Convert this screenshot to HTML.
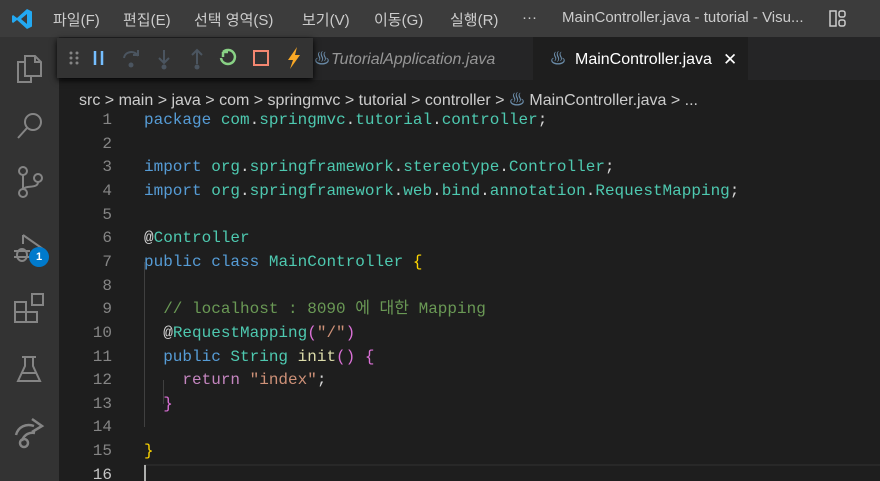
<!DOCTYPE html><html><head><meta charset="utf-8"><style>
*{margin:0;padding:0;box-sizing:border-box}
html,body{width:880px;height:481px;overflow:hidden}
body{background:#1e1e1e;font-family:"Liberation Sans","Noto Sans CJK KR",sans-serif;position:relative}
.title{position:absolute;left:0;top:0;width:880px;height:37px;background:#3c3c3c;color:#ccc;font-size:15px}
.title span{position:absolute;top:9px}
.act{position:absolute;left:0;top:37px;width:59px;height:444px;background:#333}
.tabs{position:absolute;left:59px;top:37px;width:821px;height:43px;background:#252526}
.tab{position:absolute;top:0;height:43px;font-size:16px;line-height:45px}
.bc{position:absolute;left:79px;top:86px;font-size:16px;color:#ccc;white-space:pre}
.code{position:absolute;left:59px;top:109px;font-family:"Liberation Mono","Noto Sans CJK KR",monospace;font-size:16px;line-height:23.65px;white-space:pre}
.ln{position:absolute;left:0;width:53px;text-align:right;color:#858585}
.tx{position:absolute;left:85px;color:#d4d4d4}
.k{color:#569cd6}.t{color:#4ec9b0}.c{color:#6a9955}.s{color:#ce9178}.r{color:#c586c0}.f{color:#dcdcaa}.y{color:#ffd700}.p{color:#da70d6}
.dbg{position:absolute;left:57px;top:38px;width:256px;height:40px;background:#333;box-shadow:0 2px 6px #000}
</style></head><body>
<div class="title">
<svg style="position:absolute;left:11px;top:8px" width="22" height="22" viewBox="0 0 22 22"><path d="M16 1 L21 3.5 V18.5 L16 21 L6 12 L2 15 L1 14 V8 L2 7 L6 10 Z M16 6 L10 11 L16 16 Z" fill="#23a9f2"/></svg>
<span style="left:53px">파일(F)</span><span style="left:123px">편집(E)</span><span style="left:194px">선택 영역(S)</span><span style="left:302px">보기(V)</span><span style="left:374px">이동(G)</span><span style="left:450px">실행(R)</span><span style="left:522px">···</span><span style="left:562px">MainController.java - tutorial - Visu...</span>
<svg style="position:absolute;left:829px;top:10px" width="18" height="18"><rect x="1" y="1" width="6" height="15" fill="none" stroke="#ccc" stroke-width="1.5"/><rect x="10" y="1" width="6" height="6" rx="2" fill="none" stroke="#ccc" stroke-width="1.5"/><rect x="10" y="10" width="6" height="6" rx="2" fill="none" stroke="#ccc" stroke-width="1.5"/></svg>
</div>
<div class="act">
<svg style="position:absolute;left:15px;top:17px" width="28" height="30" fill="none" stroke="#858585" stroke-width="2"><path d="M10 2 H20 L26 8 V22 H10 Z M20 2 V8 H26 M10 8 H3 V28 H16 V22"/></svg>
<svg style="position:absolute;left:15px;top:73px" width="30" height="30" fill="none" stroke="#858585" stroke-width="2"><circle cx="18" cy="12" r="8"/><path d="M12 18 L3 28"/></svg>
<svg style="position:absolute;left:15px;top:128px" width="30" height="34" fill="none" stroke="#858585" stroke-width="2"><circle cx="8" cy="6" r="4"/><circle cx="8" cy="28" r="4"/><circle cx="23" cy="13" r="4"/><path d="M8 10 V24 M23 17 C23 24 10 20 9 24"/></svg>
<svg style="position:absolute;left:12px;top:195px" width="34" height="32" fill="none" stroke="#858585" stroke-width="2"><path d="M11 3 L31 17 L20 20 M11 3 V12"/><ellipse cx="10" cy="23" rx="5" ry="6"/><path d="M2 19 H18 M2 25 H18"/></svg>
<div style="position:absolute;left:29px;top:210px;width:20px;height:20px;border-radius:50%;background:#007acc;color:#fff;font-size:11px;font-weight:bold;text-align:center;line-height:20px">1</div>
<svg style="position:absolute;left:13px;top:255px" width="32" height="32" fill="none" stroke="#858585" stroke-width="2"><path d="M2 10 H13 V30 H2 Z M2 20 H24 V30 H13 M19 2 H30 V13 H19 Z"/></svg>
<svg style="position:absolute;left:16px;top:318px" width="26" height="28" fill="none" stroke="#858585" stroke-width="2"><path d="M9 2 V11 L2 26 H24 L17 11 V2 M6 2 H20 M5 18 H21"/></svg>
<svg style="position:absolute;left:12px;top:378px" width="34" height="34" fill="none" stroke="#858585" stroke-width="2.5"><path d="M4 20 C6 12 14 8 22 11 M20 4 L30 11 L20 17 M10 26 C12 19 18 17 23 18"/><circle cx="12" cy="28" r="4"/></svg>
</div>
<div class="tabs">
<div class="tab" style="left:255px;width:218px;color:#969696;font-style:italic"><span style="position:absolute;left:0;font-style:normal;color:#6a8ba8">♨</span><span style="position:absolute;left:17px">TutorialApplication.java</span></div>
<div class="tab" style="left:474px;width:215px;background:#1e1e1e;color:#fff"><span style="position:absolute;left:17px;color:#6a8ba8">♨</span><span style="position:absolute;left:42px">MainController.java</span><span style="position:absolute;left:190px;font-size:17px">✕</span></div>
</div>
<div class="bc">src &gt; main &gt; java &gt; com &gt; springmvc &gt; tutorial &gt; controller &gt; <span style="color:#6a8ba8">♨</span> MainController.java &gt; ...</div>
<div class="dbg">
<svg width="256" height="40"><g fill="#858585"><circle cx="14" cy="15" r="1.5"/><circle cx="20" cy="15" r="1.5"/><circle cx="14" cy="20" r="1.5"/><circle cx="20" cy="20" r="1.5"/><circle cx="14" cy="25" r="1.5"/><circle cx="20" cy="25" r="1.5"/></g>
<path d="M38 13 V27 M45 13 V27" stroke="#75beff" stroke-width="2.5"/>
<g stroke="#4b5560" stroke-width="2" fill="none"><path d="M67 20 C68 13 78 12 81 18 M76 17 H81 V12"/><path d="M107 12 V24 M102 20 L107 25 L112 20"/><path d="M140 26 V13 M135 17 L140 12 L145 17"/></g>
<g fill="#4b5560"><circle cx="74" cy="27" r="2.5"/><circle cx="107" cy="29" r="2.5"/><circle cx="140" cy="29" r="2.5"/></g>
<path d="M166 14 A7 7 0 1 1 164 20 M166 14 V19 M166 14 H171" stroke="#89d185" stroke-width="2.5" fill="none"/>
<rect x="197" y="13" width="14" height="14" fill="none" stroke="#f48771" stroke-width="2"/>
<path d="M240 9 L231 22 H236 L233 31 L243 17 H238 Z" fill="#f9a825"/></svg>
</div>
<div class="code">
<div class="ln" style="top:0">1</div><div class="ln" style="top:23.65px">2</div><div class="ln" style="top:47.3px">3</div><div class="ln" style="top:70.95px">4</div><div class="ln" style="top:94.6px">5</div><div class="ln" style="top:118.25px">6</div><div class="ln" style="top:141.9px">7</div><div class="ln" style="top:165.55px">8</div><div class="ln" style="top:189.2px">9</div><div class="ln" style="top:212.85px">10</div><div class="ln" style="top:236.5px">11</div><div class="ln" style="top:260.15px">12</div><div class="ln" style="top:283.8px">13</div><div class="ln" style="top:307.45px">14</div><div class="ln" style="top:331.1px">15</div><div class="ln" style="top:354.75px;color:#c6c6c6">16</div>
<div style="position:absolute;left:85px;top:153px;width:1px;height:165px;background:#404040"></div>
<div style="position:absolute;left:104px;top:271px;width:1px;height:24px;background:#404040"></div>
<div style="position:absolute;left:85px;top:355px;width:795px;height:24px;border-top:2px solid #282828"></div>
<div style="position:absolute;left:85px;top:356px;width:2px;height:22px;background:#aeafad"></div>
<div class="tx" style="top:0"><span class="k">package</span> <span class="t">com</span>.<span class="t">springmvc</span>.<span class="t">tutorial</span>.<span class="t">controller</span>;</div>
<div class="tx" style="top:47.3px"><span class="k">import</span> <span class="t">org</span>.<span class="t">springframework</span>.<span class="t">stereotype</span>.<span class="t">Controller</span>;</div>
<div class="tx" style="top:70.95px"><span class="k">import</span> <span class="t">org</span>.<span class="t">springframework</span>.<span class="t">web</span>.<span class="t">bind</span>.<span class="t">annotation</span>.<span class="t">RequestMapping</span>;</div>
<div class="tx" style="top:118.25px">@<span class="t">Controller</span></div>
<div class="tx" style="top:141.9px"><span class="k">public</span> <span class="k">class</span> <span class="t">MainController</span> <span class="y">{</span></div>
<div class="tx c" style="top:189.2px">  // localhost : 8090 에 대한 Mapping</div>
<div class="tx" style="top:212.85px">  @<span class="t">RequestMapping</span><span class="p">(</span><span class="s">"/"</span><span class="p">)</span></div>
<div class="tx" style="top:236.5px">  <span class="k">public</span> <span class="t">String</span> <span class="f">init</span><span class="p">()</span> <span class="p">{</span></div>
<div class="tx" style="top:260.15px">    <span class="r">return</span> <span class="s">"index"</span>;</div>
<div class="tx" style="top:283.8px">  <span class="p">}</span></div>
<div class="tx" style="top:331.1px"><span class="y">}</span></div>
</div>
</body></html>
